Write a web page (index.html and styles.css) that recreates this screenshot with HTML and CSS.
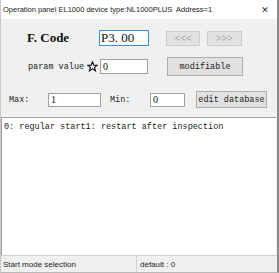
FILE: index.html
```html
<!DOCTYPE html>
<html lang="en">
<head>
  <meta charset="UTF-8">
  <title>Operation panel</title>
  <link rel="stylesheet" href="styles.css">
</head>
<body>
  <div class="window">
    <div class="titlebar">
      <span class="title">Operation panel EL1000 device type:NL1000PLUS&nbsp; Address=1</span>
      <span class="close">✕</span>
    </div>

    <div class="panel">
      <div class="row row-code">
        <label class="code-label">F. Code</label>
        <input class="code-input" type="text" value="P3. 00">
        <button class="btn btn-disabled btn-prev">&lt;&lt;&lt;</button>
        <button class="btn btn-disabled btn-next">&gt;&gt;&gt;</button>
      </div>

      <div class="row row-param">
        <label class="param-label">param value</label>
        <svg class="star" width="11" height="11" viewBox="0 0 11 11">
          <path d="M5.5 0.8 L6.8 4.1 L10.3 4.2 L7.6 6.4 L8.5 9.9 L5.5 7.9 L2.5 9.9 L3.4 6.4 L0.7 4.2 L4.2 4.1 Z" fill="none" stroke="#111" stroke-width="1.1" stroke-linejoin="miter"/>
        </svg>
        <input class="param-input" type="text" value="0">
        <button class="btn btn-modify">modifiable</button>
      </div>

      <div class="row row-range">
        <label class="max-label">Max:</label>
        <input class="max-input" type="text" value="1">
        <label class="min-label">Min:</label>
        <input class="min-input" type="text" value="0">
        <button class="btn btn-edit">edit database</button>
      </div>
    </div>

    <div class="desc">0: regular start1: restart after inspection</div>

    <div class="statusbar">
      <div class="status-left">Start mode selection</div>
      <div class="status-right">default : 0</div>
    </div>
  </div>
</body>
</html>
```

FILE: styles.css
```css
body {
  margin: 0;
  background-color: #f0f0f0;
}

.window {
  width: 279px;
  height: 273px;
  box-sizing: border-box;
  background-color: #f0f0f0;
  border-left: 1px solid #c8c8c8;
  border-right: 2px solid #8a8a8a;
  border-bottom: 1px solid #b8b8b8;
  display: flex;
  flex-direction: column;
}

.titlebar {
  height: 19px;
  background-color: white;
  display: flex;
  align-items: center;
  justify-content: space-between;
  padding: 0 0 0 2px;
  font-family: 'Liberation Sans', Arial, sans-serif;
  font-size: 7.5px;
  color: #222;
  white-space: nowrap;
}

.close {
  width: 16px;
  margin-right: 4px;
  text-align: center;
  font-family: 'DejaVu Sans', sans-serif;
  font-size: 9px;
  color: #333;
}

.panel {
  padding-top: 11px;
  height: 87px;
  font-family: 'Liberation Mono', monospace;
  font-size: 8.5px;
  color: #222;
}

.row {
  display: flex;
  align-items: center;
}

input {
  box-sizing: border-box;
  margin: 0;
  padding: 0 2px;
  background-color: white;
  border: 1px solid #a0a0a0;
  font-family: 'Liberation Serif', serif;
  font-size: 10px;
  color: #111;
  outline: none;
}

.btn {
  box-sizing: border-box;
  margin: 0;
  padding: 0;
  background-color: #e1e1e1;
  border: 1px solid #adadad;
  font-family: 'Liberation Mono', monospace;
  font-size: 8.5px;
  color: #222;
}

.btn-disabled {
  background-color: #e2e2e2;
  border-color: #cdcdcd;
  color: #a8a8a8;
  font-family: 'Noto Sans', sans-serif;
  font-size: 10px;
  line-height: 1;
}

/* row 1 */
.row-code {
  height: 16px;
}

.code-label {
  width: 98px;
  padding-left: 26px;
  box-sizing: border-box;
  font-family: 'Liberation Serif', serif;
  font-weight: bold;
  font-size: 13px;
  color: #111;
}

.code-input {
  width: 50px;
  height: 16px;
  border-color: #3c8fd8;
  font-size: 13px;
  padding-left: 1px;
}

.btn-prev {
  margin-left: 17px;
  width: 34px;
  height: 15px;
}

.btn-next {
  margin-left: 7px;
  width: 35px;
  height: 15px;
}

/* row 2 */
.row-param {
  margin-top: 11px;
  height: 19px;
}

.param-label {
  padding-left: 27px;
  width: 58px;
}

.star {
  margin-left: 1px;
  margin-right: 2px;
}

.param-input {
  width: 48px;
  height: 15px;
}

.btn-modify {
  margin-left: 19px;
  width: 76px;
  height: 19px;
}

/* row 3 */
.row-range {
  margin-top: 15px;
  height: 17px;
}

.max-label {
  padding-left: 8px;
  width: 39px;
}

.max-input {
  width: 53px;
  height: 14px;
}

.min-label {
  margin-left: 9px;
  width: 40px;
}

.min-input {
  width: 35px;
  height: 14px;
}

.btn-edit {
  margin-left: 11px;
  width: 71px;
  height: 17px;
}

.desc {
  flex: 1;
  background-color: white;
  border-top: 1px solid #a0a0a0;
  border-left: 1px solid #a0a0a0;
  margin-right: 1px;
  padding: 4px 2px;
  font-family: 'Liberation Mono', monospace;
  font-size: 8.5px;
  color: #222;
}

.statusbar {
  height: 16px;
  display: flex;
  border-top: 1px solid #d0d0d0;
  font-family: 'Liberation Sans', Arial, sans-serif;
  font-size: 8px;
  color: #222;
}

.status-left {
  width: 133px;
  padding-left: 2px;
  border-right: 1px solid #d0d0d0;
  display: flex;
  align-items: center;
}

.status-right {
  padding-left: 3px;
  display: flex;
  align-items: center;
}
```
